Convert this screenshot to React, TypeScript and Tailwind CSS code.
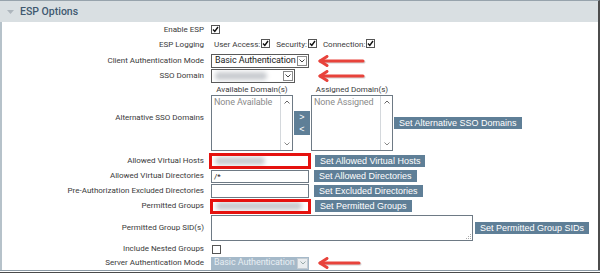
import React from "react"

const lbl = "w-[211px] shrink-0 pr-[7px] text-right text-[8px] leading-none text-[#3a3a3a]"
const btn = "h-[12px] px-[5px] bg-[#5f7f97] text-white text-[9px] leading-[12px] font-['Liberation_Sans',Arial,sans-serif] whitespace-nowrap"

function Check({ on = false }: { on?: boolean }) {
  return (
    <span className="inline-flex w-[9px] h-[9px] border border-[#555] bg-white items-center justify-center shrink-0">
      {on && (
        <svg width="7" height="7" viewBox="0 0 7 7">
          <path d="M1 3.6 L2.8 5.5 L6 1" fill="none" stroke="#111" strokeWidth="1.4" />
        </svg>
      )}
    </span>
  )
}

function Chevron({ up = false, color = "#444" }: { up?: boolean; color?: string }) {
  return (
    <svg width="6" height="4" viewBox="0 0 6 4">
      <path d={up ? "M0.5 3.5 L3 1 L5.5 3.5" : "M0.5 0.5 L3 3 L5.5 0.5"} fill="none" stroke={color} strokeWidth="1" />
    </svg>
  )
}

function Arrow({ w = 48 }: { w?: number }) {
  return (
    <svg width={w} height="12" viewBox={`0 0 ${w} 12`} className="shrink-0">
      <g stroke="#b9b9b9" strokeWidth="3" strokeLinecap="round" fill="none" opacity="0.6">
        <path d={`M3 7 L${w - 2} 7`} />
      </g>
      <g stroke="#e8433b" strokeWidth="3" strokeLinecap="round" strokeLinejoin="round" fill="none">
        <path d={`M2 6 L${w - 3} 6`} />
        <path d="M9 1.5 L2 6 L9 10.5" />
      </g>
    </svg>
  )
}

function Blur({ w }: { w: number }) {
  return (
    <div className="h-full flex items-center overflow-hidden pl-[3px]">
      <div className="h-[8px] bg-[#c9ccd0] blur-[2px] rounded-sm" style={{ width: w }} />
    </div>
  )
}

function Row({ label, className, children }: { label: string; className: string; children?: React.ReactNode }) {
  return (
    <div className={`flex items-center ${className}`}>
      <div className={lbl}>{label}</div>
      <div className="flex items-center">{children}</div>
    </div>
  )
}

function ListBox({ text }: { text: string }) {
  return (
    <div className="w-[82px] h-[56px] border border-[#6e7a85] bg-white flex">
      <div className="flex-1 text-[9px] tracking-[-0.1px] leading-[11px] text-[#8a8a8a] pl-[2px] pt-[1px] whitespace-nowrap">{text}</div>
      <div className="w-[12px] border-l border-[#d4d8dc] flex flex-col items-center justify-between py-[4px]">
        <Chevron up color="#666" />
        <Chevron color="#888" />
      </div>
    </div>
  )
}

export default function App() {
  return (
    <div className="w-[600px] h-[273px] bg-white font-['Roboto',Arial,sans-serif] overflow-hidden">
      <div className="h-[270px] border-r-2 border-r-[#4c4c4c] border-t border-t-[#97a3ac] flex flex-col">
        <div className="h-[21px] bg-[#d9dfe2] flex items-center pl-[7px] gap-[6px] shrink-0">
          <svg width="7" height="4" viewBox="0 0 7 4">
            <path d="M0 0 L7 0 L3.5 4 Z" fill="#aeb6bd" />
          </svg>
          <span className="text-[10.5px] font-medium text-[#3f5970]">ESP Options</span>
        </div>
        <div className="flex-1 border-l-2 border-l-[#b6c2ca]">
          <Row label="Enable ESP" className="h-[15px] -ml-[2px]">
            <Check on />
          </Row>
          <Row label="ESP Logging" className="h-[16px] -ml-[2px]">
            <div className="flex items-center text-[8px] text-[#3a3a3a] pl-[3px]">
              <span>User Access:</span>
              <span className="ml-[1px]"><Check on /></span>
              <span className="ml-[6px]">Security:</span>
              <span className="ml-[1px]"><Check on /></span>
              <span className="ml-[6px]">Connection:</span>
              <span className="ml-[1px]"><Check on /></span>
            </div>
          </Row>
          <Row label="Client Authentication Mode" className="h-[15px] -ml-[2px]">
            <div className="w-[98px] h-[14px] border border-[#5a5a5a] bg-white flex items-center">
              <span className="flex-1 text-[9px] tracking-[-0.1px] text-[#222] pl-[3px] whitespace-nowrap">Basic Authentication</span>
              <span className="w-[10px] h-[10px] mr-[1px] border border-[#8a8a8a] flex items-center justify-center"><Chevron /></span>
            </div>
            <span className="ml-[9px]"><Arrow /></span>
          </Row>
          <Row label="SSO Domain" className="h-[16px] -ml-[2px]">
            <div className="w-[84px] h-[14px] border border-[#5a5a5a] bg-white flex items-center">
              <div className="flex-1 h-full"><Blur w={52} /></div>
              <span className="w-[10px] h-[10px] mr-[1px] border border-[#8a8a8a] flex items-center justify-center"><Chevron /></span>
            </div>
            <span className="ml-[23px]"><Arrow /></span>
          </Row>
          <Row label="Alternative SSO Domains" className="h-[68px] -ml-[2px]">
            <div className="flex flex-col">
              <div className="h-[10px] flex text-[8px] leading-[10px] text-[#3a3a3a]">
                <span className="w-[82px] text-center">Available Domain(s)</span>
                <span className="w-[18px]" />
                <span className="w-[82px] text-center">Assigned Domain(s)</span>
              </div>
              <div className="flex items-center">
                <ListBox text="None Available" />
                <div className="flex flex-col mx-[1px] bg-[#5f7f97] w-[16px] text-white text-[9px] leading-[11px] font-['Liberation_Sans',Arial,sans-serif] items-center">
                  <span className="h-[12px] flex items-center">&gt;</span>
                  <span className="h-[12px] flex items-center">&lt;</span>
                </div>
                <ListBox text="None Assigned" />
                <span className={`${btn} ml-[1px]`}>Set Alternative SSO Domains</span>
              </div>
            </div>
          </Row>
          <Row label="Allowed Virtual Hosts" className="h-[17px] -ml-[2px]">
            <div className="-ml-[2px] w-[102px] h-[16px] border-[3px] border-[#e5120f] bg-white">
              <Blur w={50} />
            </div>
            <span className={`${btn} ml-[4px]`}>Set Allowed Virtual Hosts</span>
          </Row>
          <Row label="Allowed Virtual Directories" className="h-[14px] -ml-[2px]">
            <div className="w-[98px] h-[13px] border border-[#6e7a85] bg-white text-[8px] leading-[11px] pl-[2px] text-[#222]">/*</div>
            <span className={`${btn} ml-[5px]`}>Set Allowed Directories</span>
          </Row>
          <Row label="Pre-Authorization Excluded Directories" className="h-[15px] -ml-[2px]">
            <div className="w-[98px] h-[14px] border border-[#6e7a85] bg-white" />
            <span className={`${btn} ml-[5px]`}>Set Excluded Directories</span>
          </Row>
          <Row label="Permitted Groups" className="h-[16px] -ml-[2px]">
            <div className="-ml-[1px] w-[101px] h-[15px] border-[3px] border-[#e5120f] bg-white">
              <Blur w={86} />
            </div>
            <span className={`${btn} ml-[4px]`}>Set Permitted Groups</span>
          </Row>
          <Row label="Permitted Group SID(s)" className="h-[27px] -ml-[2px]">
            <div className="w-[262px] h-[26px] border border-[#6e7a85] bg-white relative">
              <svg width="5" height="5" viewBox="0 0 5 5" className="absolute right-[1px] bottom-[1px]">
                <g fill="#aaa">
                  <rect x="4" y="0" width="1" height="1" />
                  <rect x="2" y="2" width="1" height="1" />
                  <rect x="4" y="2" width="1" height="1" />
                  <rect x="0" y="4" width="1" height="1" />
                  <rect x="2" y="4" width="1" height="1" />
                  <rect x="4" y="4" width="1" height="1" />
                </g>
              </svg>
            </div>
            <span className={`${btn} ml-[2px]`}>Set Permitted Group SIDs</span>
          </Row>
          <Row label="Include Nested Groups" className="h-[15px] -ml-[2px]">
            <span className="ml-[1px]"><Check /></span>
          </Row>
          <Row label="Server Authentication Mode" className="h-[14px] -ml-[2px]">
            <div className="w-[98px] h-[13px] bg-[#a5b9c9] flex items-center">
              <span className="flex-1 text-[9px] tracking-[-0.1px] text-[#e8eef3] pl-[3px] whitespace-nowrap">Basic Authentication</span>
              <span className="w-[11px] h-[11px] mr-[1px] bg-[#e9edf0] border border-[#c4ccd3] flex items-center justify-center"><Chevron color="#9aa" /></span>
            </div>
            <span className="ml-[9px]"><Arrow w={44} /></span>
          </Row>
        </div>
      </div>
      <div className="h-[3px] border-t border-t-[#8c9aa5] border-b border-b-[#4a4a4a] bg-white" />
    </div>
  )
}
